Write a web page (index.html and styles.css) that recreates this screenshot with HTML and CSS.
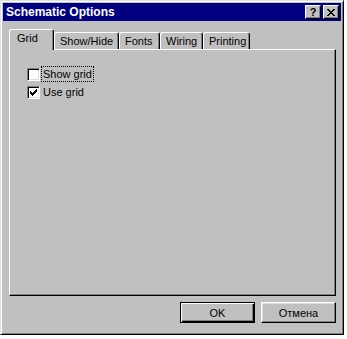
FILE: index.html
```html
<!DOCTYPE html>
<html lang="en">
<head>
    <meta charset="UTF-8">
    <title>Schematic Options</title>
    <link rel="stylesheet" href="styles.css">
</head>
<body>
    <div class="window">
        <div class="titlebar">
            <span class="title">Schematic Options</span>
            <div class="title-buttons">
                <button class="tbtn">?</button>
                <button class="tbtn">
                    <svg width="8" height="7" viewBox="0 0 8 7" shape-rendering="crispEdges">
                        <path d="M0 0h2v1h-2zM6 0h2v1h-2zM1 1h2v1h-2zM5 1h2v1h-2zM2 2h4v1h-4zM3 3h2v1h-2zM2 4h4v1h-4zM1 5h2v1h-2zM5 5h2v1h-2zM0 6h2v1h-2zM6 6h2v1h-2z" fill="#000"/>
                    </svg>
                </button>
            </div>
        </div>

        <div class="tabs">
            <div class="tab active tab-grid">Grid</div>
            <div class="tab tab-show">Show/Hide</div>
            <div class="tab tab-fonts">Fonts</div>
            <div class="tab tab-wiring">Wiring</div>
            <div class="tab tab-printing">Printing</div>
        </div>

        <div class="panel">
            <label class="check">
                <span class="box"></span>
                <span class="label focus">Show grid</span>
            </label>
            <label class="check">
                <span class="box">
                    <svg width="7" height="7" viewBox="0 0 7 7" shape-rendering="crispEdges">
                        <path d="M6 0h1v3h-1zM5 1h1v3h-1zM4 2h1v3h-1zM0 2h1v3h-1zM1 3h1v3h-1zM2 4h1v3h-1zM3 3h1v3h-1z" fill="#000"/>
                    </svg>
                </span>
                <span class="label">Use grid</span>
            </label>
        </div>

        <div class="actions">
            <button class="btn default">OK</button>
            <button class="btn">Отмена</button>
        </div>
    </div>
</body>
</html>
```

FILE: styles.css
```css
*{box-sizing:border-box}
body{margin:0;background:#fff;font-family:"Liberation Sans",Arial,sans-serif;font-size:11px;color:#000}
.window{width:344px;height:335px;background:#c0c0c0;border:1px solid;border-color:#dfdfdf #000 #000 #dfdfdf;box-shadow:inset 1px 1px #fff,inset -1px -1px #808080;padding:2px;display:flex;flex-direction:column}
.titlebar{height:18px;background:#000080;color:#fff;display:flex;align-items:center;justify-content:space-between;padding:0 2px 0 3px}
.title{font-weight:bold;font-size:12px}
.title-buttons{display:flex;gap:2px}
.tbtn{width:16px;height:14px;padding:0;margin:0;background:#c0c0c0;border:1px solid;border-color:#fff #000 #000 #fff;box-shadow:inset -1px -1px #808080;font:bold 11px "Liberation Sans",Arial,sans-serif;color:#000;display:flex;align-items:center;justify-content:center;line-height:1}
.tabs{display:flex;align-items:flex-end;height:21px;margin:8px 0 0 6px;position:relative;z-index:1}
.tab{height:17px;margin-bottom:1px;padding:1px 0 0 5px;line-height:14px;white-space:nowrap;background:#c0c0c0;border:1px solid;border-bottom:none;border-color:#fff #000 #000 #fff;border-radius:3px 3px 0 0;box-shadow:inset -1px 0 #808080}
.tab.active{height:21px;margin-bottom:0;padding-left:7px}
.tab-grid{width:45px}
.tab-show{width:65px}
.tab-fonts{width:41px}
.tab-wiring{width:43px}
.tab-printing{width:47px}
.panel{width:327px;height:247px;margin:-1px 0 0 6px;padding:15px 0 0 17px;border:1px solid;border-color:#fff #000 #000 #fff;box-shadow:inset -1px -1px #808080}
.check{display:flex;align-items:center;height:18px}
.box{width:13px;height:13px;background:#fff;border:1px solid;border-color:#808080 #fff #fff #808080;box-shadow:inset 1px 1px #000,inset -1px -1px #dfdfdf;display:flex;align-items:center;justify-content:center}
.label{margin-left:1px;padding:0 1px;line-height:14px;border:1px dotted transparent}
.label.focus{border-color:#000}
.actions{display:flex;justify-content:flex-end;gap:6px;margin-top:6px;padding-right:5px}
.btn{width:75px;height:21px;padding:0;background:#c0c0c0;border:1px solid;border-color:#fff #000 #000 #fff;box-shadow:inset -1px -1px #808080,inset 1px 1px #dfdfdf;font:11px "Liberation Sans",Arial,sans-serif;color:#000}
.btn.default{border-color:#000;box-shadow:inset 1px 1px #fff,inset -1px -1px #000,inset -2px -2px #808080}
```
